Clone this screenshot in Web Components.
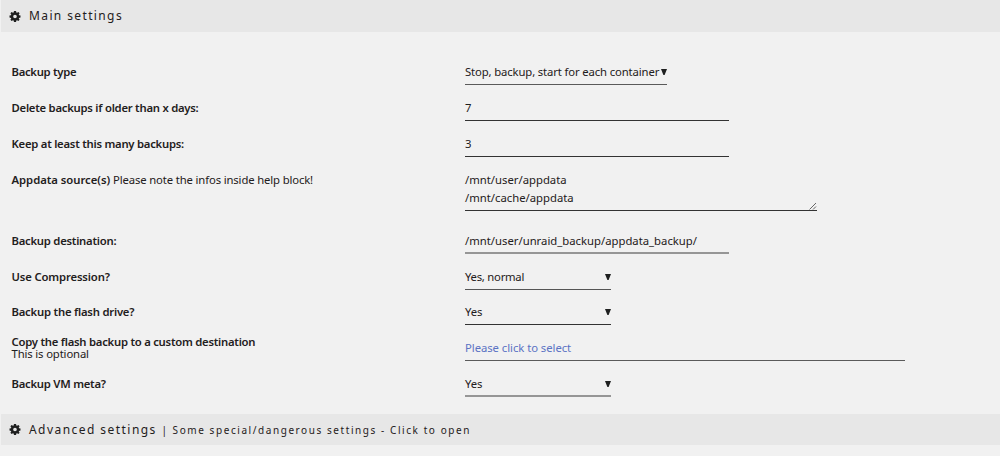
<!DOCTYPE html>
<html lang="en">
<head>
    <meta charset="UTF-8">
    <meta name="viewport" content="width=device-width, initial-scale=1.0">
    <title>Appdata Backup</title>
    <style>
        body {
            margin: 0;
            background: #f1f1f1;
            color: #1f2020;
            font: 11.3px/18px "Noto Sans", "Open Sans", sans-serif;
        }
    </style>
</head>
<body>
    <section-title style="--ls: 1.38px">Main settings</section-title>
    <settings-form>
        <settings-row style="--ls: -.3px"><b>Backup type</b>
            <select-field slot="control" style="--width: 202px; --line: #5a5a5a">Stop, backup, start for each container</select-field></settings-row>
        <settings-row><b>Delete backups if older than x days:</b>
            <text-field slot="control">7</text-field></settings-row>
        <settings-row><b>Keep at least this many backups:</b>
            <text-field slot="control">3</text-field></settings-row>
        <settings-row style="--height: 61px; --ls: -.03px"><b>Appdata source(s)</b> <span>Please note the infos inside help block!</span>
            <area-field slot="control"><span>/mnt/user/appdata</span><br><span>/mnt/cache/appdata</span></area-field></settings-row>
        <settings-row><b>Backup destination:</b>
            <text-field slot="control" style="--line: #969696; --thick: 2px">/mnt/user/unraid_backup/appdata_backup/</text-field></settings-row>
        <settings-row style="--height: 35px; --ls: -.15px"><b>Use Compression?</b>
            <select-field slot="control" style="--field-ls: -.25px; --line: #555">Yes, normal</select-field></settings-row>
        <settings-row style="--ls: -.22px"><b>Backup the flash drive?</b>
            <select-field slot="control">Yes</select-field></settings-row>
        <settings-row style="--label-line: 12px"><b>Copy the flash backup to a custom destination</b><br><span>This is optional</span>
            <text-field slot="control" style="--field-ls: -.05px; --width: 440px; --line: #5a5a5a; color: #5b73c4">Please click to select</text-field></settings-row>
        <settings-row style="--height: 42px"><b>Backup VM meta?</b>
            <select-field slot="control" style="--line: #969696; --thick: 2px">Yes</select-field></settings-row>
    </settings-form>
    <section-title style="--height: 31px; --ls: 1.45px">Advanced settings <span slot="note">| Some special/dangerous settings - Click to open</span></section-title>
    <script>
        class SectionTitle extends HTMLElement {
            connectedCallback() {
                const shadowRoot = this.attachShadow({mode: 'open'});
                shadowRoot.innerHTML = `
                <style>
                    :host {
                        display: flex;
                        align-items: center;
                        box-sizing: border-box;
                        height: var(--height, 32px);
                        margin-left: 1px;
                        padding-left: 8px;
                        background: #e7e7e7;
                        font-size: 12px;
                        letter-spacing: var(--ls);
                        white-space: pre;
                    }
                    svg {
                        width: 12px;
                        height: 11px;
                        margin-right: 8px;
                    }
                    ::slotted([slot=note]) {
                        font-size: 10px;
                        letter-spacing: 1.57px;
                    }
                </style>
                <svg viewBox="0 0 12 12" fill="#1f2020" fill-rule="evenodd">
                    <path d="M4.9 0h2.2l.4 1.6.7.3 1.5-.9L11 2.4l-.9 1.4.3.7 1.6.4v2.2l-1.6.4-.3.7.9 1.4L9.7 11l-1.5-.9-.7.3L7.1 12H4.9l-.4-1.6-.7-.3-1.5.9L1 9.6l.9-1.4-.3-.7L0 7.1V4.9l1.6-.4.3-.7L1 2.4 2.3 1l1.5.9.7-.3zM6 4a2 2 0 1 0 0 4a2 2 0 0 0 0-4z"/>
                </svg>
                <div><slot></slot><slot name="note"></slot></div>`;
            }
        }

        class SettingsForm extends HTMLElement {
            connectedCallback() {
                const shadowRoot = this.attachShadow({mode: 'open'});
                shadowRoot.innerHTML = `
                <style>
                    :host {
                        display: block;
                        padding: 28px 0 0 12px;
                    }
                </style>
                <slot></slot>`;
            }
        }

        class SettingsRow extends HTMLElement {
            connectedCallback() {
                const shadowRoot = this.attachShadow({mode: 'open'});
                shadowRoot.innerHTML = `
                <style>
                    :host {
                        display: grid;
                        grid-template-columns: 453px 1fr;
                        align-items: start;
                        height: var(--height, 36px);
                    }
                    .label {
                        display: flex;
                        align-items: center;
                        height: 24px;
                        line-height: var(--label-line, 18px);
                        margin-left: -.5px;
                    }
                    ::slotted(b) {
                        font-weight: 600;
                        letter-spacing: var(--ls, -.25px);
                    }
                    ::slotted(span) {
                        letter-spacing: -.14px;
                    }
                </style>
                <div class="label"><div><slot></slot></div></div>
                <slot name="control"></slot>`;
            }
        }

        // underline shared by every kind of field
        const fieldStyle = `
            :host {
                display: flex;
                align-items: center;
                box-sizing: border-box;
                width: var(--width, 264px);
                height: 25px;
                border-bottom: var(--thick, 1px) solid var(--line, #333);
                white-space: nowrap;
            }
            div {
                letter-spacing: var(--field-ls, 0);
            }`;

        class TextField extends HTMLElement {
            connectedCallback() {
                const shadowRoot = this.attachShadow({mode: 'open'});
                shadowRoot.innerHTML = `<style>${fieldStyle}</style><div><slot></slot></div>`;
            }
        }

        class SelectField extends HTMLElement {
            connectedCallback() {
                const shadowRoot = this.attachShadow({mode: 'open'});
                shadowRoot.innerHTML = `
                <style>
                    ${fieldStyle}
                    :host {
                        width: var(--width, 146px);
                    }
                    div {
                        flex: 1;
                        min-width: 0;
                        letter-spacing: var(--field-ls, -.13px);
                    }
                    svg {
                        flex: none;
                        width: 6px;
                        height: 6px;
                    }
                </style>
                <div><slot></slot></div>
                <svg viewBox="0 0 6 6"><path d="M0 0h6L3.6 6H2.4z" fill="#1f2020"/></svg>`;
            }
        }

        class AreaField extends HTMLElement {
            connectedCallback() {
                const shadowRoot = this.attachShadow({mode: 'open'});
                shadowRoot.innerHTML = `
                <style>
                    ${fieldStyle}
                    :host {
                        width: 352px;
                        height: 43px;
                        justify-content: space-between;
                        align-items: flex-end;
                    }
                    div {
                        align-self: flex-start;
                        padding-top: 3px;
                    }
                    svg {
                        width: 8px;
                        height: 8px;
                    }
                </style>
                <div><slot></slot></div>
                <svg viewBox="0 0 8 8" fill="none" stroke="#666"><path d="M.5 7.5L7 1M4 7.5L7 4.5"/></svg>`;
            }
        }

        window.customElements.define('section-title', SectionTitle);
        window.customElements.define('settings-form', SettingsForm);
        window.customElements.define('settings-row', SettingsRow);
        window.customElements.define('text-field', TextField);
        window.customElements.define('select-field', SelectField);
        window.customElements.define('area-field', AreaField);
    </script>
</body>
</html>
